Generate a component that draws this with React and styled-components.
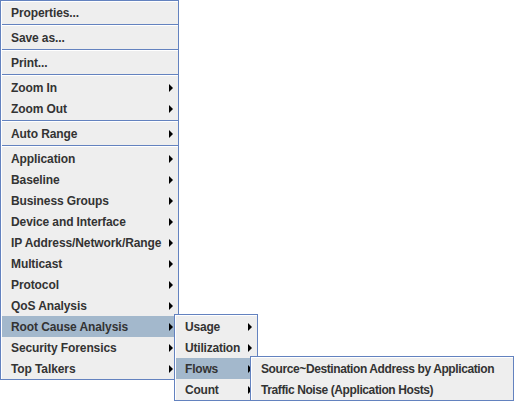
import styled, { createGlobalStyle } from "styled-components";

const GlobalStyle = createGlobalStyle`
  html, body {
    margin: 0;
    padding: 0;
    background: #fff;
  }
  body {
    font-family: "Liberation Sans", Arial, sans-serif;
  }
`;

const Page = styled.div`
  width: 515px;
  height: 403px;
  position: relative;
  overflow: hidden;
  background: #fff;
`;

const Popup = styled.div`
  box-sizing: border-box;
  width: ${(p) => p.$width}px;
  background: #eeeeee;
  border: 1px solid #6382bf;
  display: flex;
  flex-direction: column;
  letter-spacing: ${(p) => p.$spacing || 0}px;
  /* metal style inner highlight on top and left */
  box-shadow: inset 1px 1px 0 #ffffff;
  padding: 1px 0 0 1px;
`;

const SubPopup = styled(Popup)`
  position: absolute;
  left: ${(p) => p.$left}px;
  top: -2px;
  z-index: 2;
`;

const Item = styled.div`
  position: relative;
  height: 21px;
  display: flex;
  align-items: center;
  justify-content: space-between;
  padding: 0 5px 0 9px;
  font-size: 12px;
  font-weight: bold;
  color: #333333;
  white-space: nowrap;
  background: ${(p) => (p.$selected ? "#a3b8cc" : "transparent")};
`;

const Label = styled.span`
  line-height: 21px;
  padding-top: 1px;
`;

const Arrow = styled.span`
  width: 0;
  height: 0;
  border-top: 4px solid transparent;
  border-bottom: 4px solid transparent;
  border-left: 4px solid #000;
  margin-top: 1px;
`;

const Separator = styled.div`
  height: 4px;
  box-sizing: border-box;
  border-top: 1px solid #eeeeee;
  &::before {
    content: "";
    display: block;
    height: 1px;
    background: #6382bf;
  }
  &::after {
    content: "";
    display: block;
    height: 1px;
    background: #ffffff;
  }
`;

const MenuItem = ({ label, sub, selected, children }) => (
  <Item $selected={selected}>
    <Label>{label}</Label>
    {sub && <Arrow />}
    {children}
  </Item>
);

const flowsMenu = [
  "Source~Destination Address by Application",
  "Traffic Noise (Application Hosts)",
];

const rootCauseMenu = ["Usage", "Utilization", "Flows", "Count"];

const mainMenu = [
  "Application",
  "Baseline",
  "Business Groups",
  "Device and Interface",
  "IP Address/Network/Range",
  "Multicast",
  "Protocol",
  "QoS Analysis",
  "Root Cause Analysis",
  "Security Forensics",
  "Top Talkers",
];

const App = () => {
  return (
    <Page>
      <GlobalStyle />
      <Popup $width={179} $spacing={-0.1}>
        <MenuItem label="Properties..." />
        <Separator />
        <MenuItem label="Save as..." />
        <Separator />
        <MenuItem label="Print..." />
        <Separator />
        <MenuItem label="Zoom In" sub />
        <MenuItem label="Zoom Out" sub />
        <Separator />
        <MenuItem label="Auto Range" sub />
        <Separator />
        {mainMenu.map((name) =>
          name === "Root Cause Analysis" ? (
            <MenuItem key={name} label={name} sub selected>
              <SubPopup $width={84} $left={172} $spacing={-0.2}>
                {rootCauseMenu.map((s) =>
                  s === "Flows" ? (
                    <MenuItem key={s} label={s} sub selected>
                      <SubPopup $width={264} $left={74} $spacing={-0.4}>
                        {flowsMenu.map((f) => (
                          <MenuItem key={f} label={f} />
                        ))}
                      </SubPopup>
                    </MenuItem>
                  ) : (
                    <MenuItem key={s} label={s} sub />
                  )
                )}
              </SubPopup>
            </MenuItem>
          ) : (
            <MenuItem key={name} label={name} sub />
          )
        )}
      </Popup>
    </Page>
  );
};

export default App;
